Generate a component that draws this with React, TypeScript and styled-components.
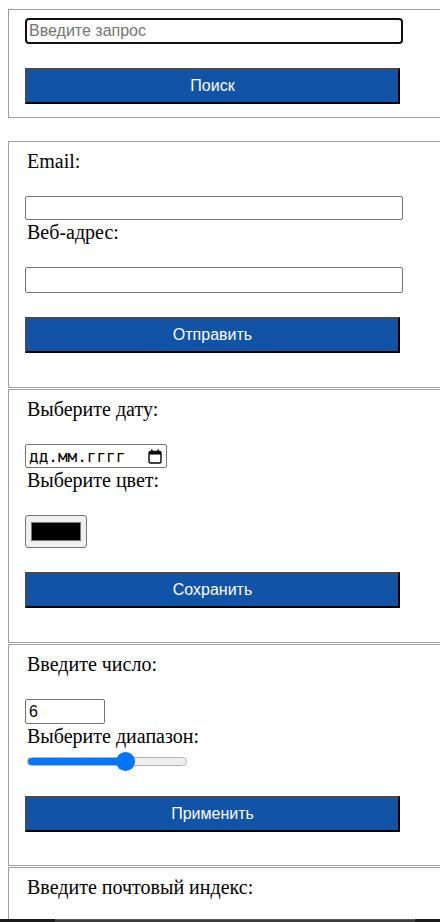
import React from "react";
import styled, { createGlobalStyle } from "styled-components";

const Global = createGlobalStyle`
  html, body { margin: 0; padding: 0; background: #ffffff; overflow: hidden; }
  body { font-family: "Liberation Serif", "Times New Roman", serif; }
`;

const Page = styled.div`
  padding: 9px 0 0 8px;
  display: flex;
  flex-direction: column;
  align-items: flex-start;
`;

const Form = styled.form<{ $pt: number; $pb: number; $mb: number }>`
  box-sizing: border-box;
  width: 470px;
  border: 1px solid #a0a0a0;
  padding: ${(p) => p.$pt}px 16px ${(p) => p.$pb}px 16px;
  margin: 0 0 ${(p) => p.$mb}px 0;
  display: flex;
  flex-direction: column;
  align-items: flex-start;
`;

const Fields = styled.div`
  display: flex;
  flex-direction: column;
  align-items: flex-start;
  gap: 2px;
`;

const Field = styled.div<{ $gap: number }>`
  display: flex;
  flex-direction: column;
  align-items: flex-start;
  gap: ${(p) => p.$gap}px;
`;

const Label = styled.label`
  display: block;
  font-family: "Liberation Serif", "Times New Roman", serif;
  font-size: 20px;
  line-height: 21px;
  color: #000;
  padding-left: 2px;
`;

const SearchInput = styled.input`
  box-sizing: border-box;
  width: 378px;
  height: 26px;
  border: 2px solid #101010;
  border-radius: 4px;
  padding: 0 2px;
  margin: 0;
  font-family: "Liberation Sans", Arial, sans-serif;
  font-size: 16px;
  outline: none;
  &::placeholder { color: #757575; }
`;

const TextInput = styled.input<{ $h: number }>`
  box-sizing: border-box;
  width: 378px;
  height: ${(p) => p.$h}px;
  border: 1px solid #767676;
  border-radius: 2px;
  padding: 0 3px;
  margin: 0;
  font-family: "Liberation Sans", Arial, sans-serif;
  font-size: 16px;
  background: #fff;
`;

const NumberInput = styled.input`
  box-sizing: border-box;
  width: 80px;
  height: 25px;
  border: 1px solid #767676;
  border-radius: 2px;
  padding: 0 3px;
  margin: 0;
  font-family: "Liberation Sans", Arial, sans-serif;
  font-size: 16px;
  color: #000;
  background: #fff;
`;

const SubmitButton = styled.button`
  box-sizing: border-box;
  width: 375px;
  height: 36px;
  margin: 24px 0 0 0;
  padding: 0;
  background: #1053a7;
  color: #ffffff;
  font-family: "Liberation Sans", Arial, sans-serif;
  font-size: 16px;
  border-style: solid;
  border-width: 2px;
  border-color: #4a4a4a #000 #000 #4a4a4a;
  cursor: pointer;
`;

const DateBox = styled.div`
  box-sizing: border-box;
  width: 142px;
  height: 24px;
  border: 1px solid #767676;
  border-radius: 2px;
  display: flex;
  align-items: center;
  justify-content: space-between;
  padding: 0 4px 0 3px;
  font-family: "DejaVu Sans Mono", monospace;
  font-size: 16px;
  color: #000;
`;

const DateText = styled.span`
  letter-spacing: 0px;
`;

const ColorBox = styled.div`
  box-sizing: border-box;
  width: 62px;
  height: 33px;
  background: #efefef;
  border: 1px solid #767676;
  border-radius: 3px;
  padding: 6px 5px;
  display: flex;
`;

const Swatch = styled.div<{ $c: string }>`
  flex: 1;
  background: ${(p) => p.$c};
  border: 1px solid #777777;
`;

const Range = styled.input`
  -webkit-appearance: none;
  appearance: none;
  width: 160px;
  height: 21px;
  margin: 4px 0 0 2px;
  background: transparent;
  &::-webkit-slider-runnable-track {
    height: 9px;
    border-radius: 5px;
    border: 1px solid #b2b2b2;
    box-sizing: border-box;
    background: linear-gradient(to right, #0075ff 0 61%, #efefef 61% 100%);
  }
  &::-webkit-slider-thumb {
    -webkit-appearance: none;
    width: 19px;
    height: 19px;
    border-radius: 50%;
    background: #0075ff;
    border: none;
    margin-top: -6px;
  }
`;

const ScrollBar = styled.div`
  position: fixed;
  left: 0;
  right: 0;
  bottom: 0;
  height: 3px;
  display: flex;
  background: #1c1c1c;
`;

const ScrollThumb = styled.div`
  margin-left: 55px;
  width: 360px;
  background: #3c3c3c;
  border-top: 1px solid #5c5c5c;
`;

const CalendarIcon = () => (
  <svg width="14" height="15" viewBox="0 0 14 15" aria-hidden>
    <rect x="1" y="2.5" width="12" height="11.5" rx="1.5" fill="none" stroke="#000" strokeWidth="1.4" />
    <rect x="1" y="2.5" width="12" height="3" fill="#000" />
    <rect x="3" y="0.5" width="1.6" height="3" fill="#000" />
    <rect x="9.4" y="0.5" width="1.6" height="3" fill="#000" />
  </svg>
);

export default function App() {
  return (
    <>
      <Global />
      <Page>
        <Form $pt={8} $pb={13} $mb={23} onSubmit={(e) => e.preventDefault()}>
          <SearchInput type="text" placeholder="Введите запрос" />
          <SubmitButton type="submit">Поиск</SubmitButton>
        </Form>

        <Form $pt={9} $pb={34} $mb={1} onSubmit={(e) => e.preventDefault()}>
          <Fields>
            <Field $gap={24}>
              <Label>Email:</Label>
              <TextInput type="email" $h={24} />
            </Field>
            <Field $gap={24}>
              <Label>Веб-адрес:</Label>
              <TextInput type="url" $h={26} />
            </Field>
          </Fields>
          <SubmitButton type="submit">Отправить</SubmitButton>
        </Form>

        <Form $pt={9} $pb={34} $mb={1} onSubmit={(e) => e.preventDefault()}>
          <Fields>
            <Field $gap={24}>
              <Label>Выберите дату:</Label>
              <DateBox>
                <DateText>дд.мм.гггг</DateText>
                <CalendarIcon />
              </DateBox>
            </Field>
            <Field $gap={24}>
              <Label>Выберите цвет:</Label>
              <ColorBox>
                <Swatch $c="#000000" />
              </ColorBox>
            </Field>
          </Fields>
          <SubmitButton type="submit">Сохранить</SubmitButton>
        </Form>

        <Form $pt={9} $pb={33} $mb={1} onSubmit={(e) => e.preventDefault()}>
          <Fields>
            <Field $gap={24}>
              <Label>Введите число:</Label>
              <NumberInput type="text" defaultValue="6" />
            </Field>
            <Field $gap={0}>
              <Label>Выберите диапазон:</Label>
              <Range type="range" min={0} max={100} defaultValue={63} />
            </Field>
          </Fields>
          <SubmitButton type="submit">Применить</SubmitButton>
        </Form>

        <Form $pt={9} $pb={40} $mb={0} onSubmit={(e) => e.preventDefault()}>
          <Fields>
            <Field $gap={24}>
              <Label>Введите почтовый индекс:</Label>
              <TextInput type="text" $h={24} />
            </Field>
          </Fields>
        </Form>
      </Page>
      <ScrollBar>
        <ScrollThumb />
      </ScrollBar>
    </>
  );
}
